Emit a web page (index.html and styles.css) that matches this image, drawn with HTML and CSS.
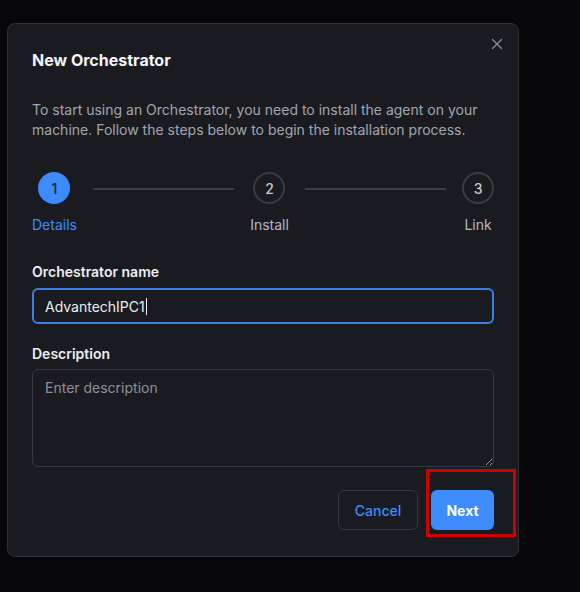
FILE: index.html
```html
<!DOCTYPE html>
<html lang="en">
<head>
<meta charset="utf-8">
<title>New Orchestrator</title>
<link rel="stylesheet" href="styles.css">
</head>
<body>
<div class="modal">
  <button class="close" aria-label="Close">
    <svg width="12" height="12" viewBox="0 0 12 12"><path d="M1.5 1.5 L10.5 10.5 M10.5 1.5 L1.5 10.5" stroke="#8a8d96" stroke-width="1.4" stroke-linecap="round"/></svg>
  </button>
  <h2 class="title">New Orchestrator</h2>
  <p class="intro">To start using an Orchestrator, you need to install the agent on your machine. Follow the steps below to begin the installation process.</p>
  <div class="stepper">
    <div class="step active"><span class="dot">1</span><span class="step-label">Details</span></div>
    <div class="line"></div>
    <div class="step"><span class="dot">2</span><span class="step-label">Install</span></div>
    <div class="line"></div>
    <div class="step"><span class="dot">3</span><span class="step-label">Link</span></div>
  </div>
  <label class="field-label">Orchestrator name</label>
  <div class="input focused">AdvantechIPC1<span class="caret"></span></div>
  <label class="field-label desc-label">Description</label>
  <textarea class="textarea" placeholder="Enter description"></textarea>
  <div class="actions">
    <button class="btn cancel">Cancel</button>
    <button class="btn next">Next<span class="highlight"></span></button>
  </div>
</div>
</body>
</html>
```
FILE: styles.css
```css
* { box-sizing: border-box; }
html, body { margin: 0; padding: 0; }
body {
  background: #08080b;
  width: 580px;
  height: 592px;
  font-family: Inter, "Noto Sans", sans-serif;
  padding: 23px 0 0 7px;
  overflow: hidden;
}
.modal {
  position: relative;
  width: 512px;
  height: 534px;
  background: #1a1b20;
  border: 1px solid #2f3139;
  border-radius: 8px;
  padding: 26px 24px 24px 24px;
  display: flex;
  flex-direction: column;
}
.close {
  position: absolute;
  top: 11px;
  right: 12px;
  width: 18px;
  height: 18px;
  padding: 0;
  border: 0;
  background: transparent;
  display: flex;
  align-items: center;
  justify-content: center;
}
.title {
  margin: 0;
  font-size: 16px;
  line-height: 20px;
  font-weight: 700;
  color: #f3f4f6;
}
.intro {
  margin: 30px 0 0 0;
  font-size: 14px;
  line-height: 20px;
  color: #a2a6af;
}
.stepper {
  margin-top: 32px;
  display: flex;
  align-items: flex-start;
}
.step {
  display: flex;
  flex-direction: column;
  align-items: center;
}
.dot {
  width: 32px;
  height: 32px;
  border-radius: 50%;
  border: 2px solid #3a3d45;
  display: flex;
  align-items: center;
  justify-content: center;
  font-size: 14px;
  font-weight: 500;
  color: #c9ccd2;
}
.step.active .dot {
  background: #3d8bfd;
  border-color: #3d8bfd;
  color: #1a1b20;
}
.step-label {
  margin-top: 11px;
  font-size: 14px;
  line-height: 20px;
  color: #b4b8c0;
}
.step.active .step-label { color: #3d8bfd; }
.line {
  flex: 1;
  height: 2px;
  background: #3a3d45;
  margin: 16px 16px 0 16px;
}
.field-label {
  margin-top: 27px;
  font-size: 14px;
  line-height: 20px;
  font-weight: 600;
  color: #eceef1;
}
.desc-label { margin-top: 20px; }
.input {
  margin-top: 6px;
  height: 36px;
  border: 1px solid #2f3139;
  border-radius: 6px;
  padding: 0 12px;
  display: flex;
  align-items: center;
  font-size: 14px;
  color: #eceef1;
}
.input.focused { border: 2px solid #3b7fe0; padding: 0 11px; }
.caret {
  display: inline-block;
  width: 1px;
  height: 17px;
  background: #eceef1;
  margin-left: 1px;
}
.textarea {
  margin-top: 5px;
  height: 98px;
  background: transparent;
  border: 1px solid #363943;
  border-radius: 6px;
  padding: 8px 12px;
  font-family: Inter, "Noto Sans", sans-serif;
  font-size: 14px;
  line-height: 20px;
  color: #eceef1;
  color-scheme: dark;
  outline: none;
}
.textarea::placeholder { color: #8d919a; }
.actions {
  margin-top: 23px;
  display: flex;
  justify-content: flex-end;
  gap: 13px;
}
.btn {
  height: 40px;
  border-radius: 6px;
  font-family: Inter, "Noto Sans", sans-serif;
  font-size: 14px;
  cursor: pointer;
}
.cancel {
  width: 80px;
  background: transparent;
  border: 1px solid #353842;
  color: #3d8bfd;
  font-weight: 500;
}
.next {
  position: relative;
  width: 63px;
  background: #3d8bfd;
  border: 0;
  color: #ffffff;
  font-weight: 700;
}
.highlight {
  position: absolute;
  left: -5px;
  top: -21px;
  width: 90px;
  height: 68px;
  border: 3px solid #cc0000;
  pointer-events: none;
}
```
